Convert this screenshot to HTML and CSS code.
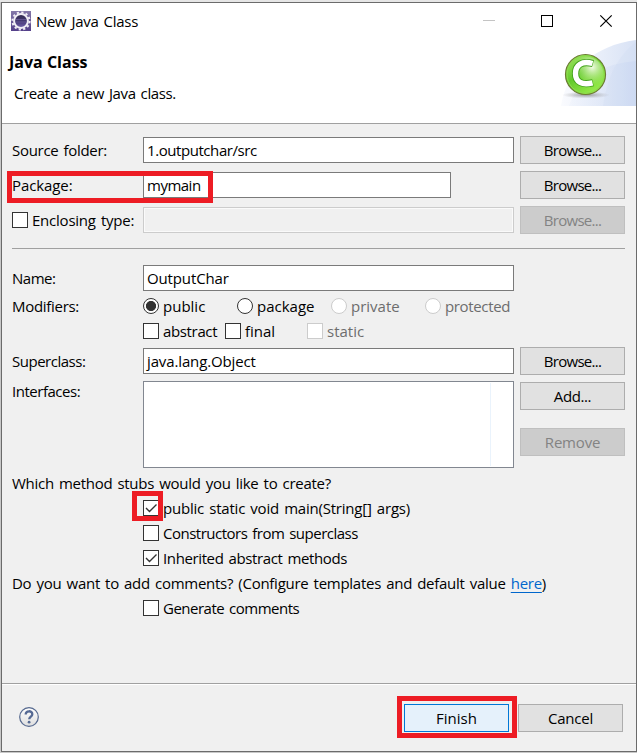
FILE: index.html
```html
<!DOCTYPE html>
<html lang="en">
<head>
<meta charset="utf-8">
<title>New Java Class</title>
<link rel="stylesheet" href="styles.css">
</head>
<body>
<div class="window">
  <header class="header">
    <div class="titlebar">
      <svg class="app-icon" width="20" height="20" viewBox="0 0 20 20">
        <defs><linearGradient id="ag" x1="0" y1="0" x2="0" y2="1"><stop offset="0" stop-color="#8478a8"/><stop offset="1" stop-color="#54408a"/></linearGradient>
        <linearGradient id="ai" x1="0" y1="0" x2="0" y2="1"><stop offset="0" stop-color="#2e2748"/><stop offset=".6" stop-color="#4a3c7c"/><stop offset="1" stop-color="#7565ae"/></linearGradient></defs>
        <rect width="20" height="20" fill="url(#ag)"/>
        <circle cx="10" cy="10" r="8.6" fill="none" stroke="#f1eef5" stroke-width="2" stroke-dasharray="2.2 2.303"/>
        <circle cx="10" cy="10" r="6.9" fill="url(#ai)" stroke="#f1eef5" stroke-width="2"/>
        <path d="M4.8 8.5h10.4M4.8 11h10.4" stroke="#7568a2" stroke-width=".6"/>
      </svg>
      <span class="title">New Java Class</span>
      <svg class="controls" width="130" height="14" viewBox="0 0 130 14">
        <path d="M0 6.5h12" stroke="#c4c4c4"/>
        <rect x="58.5" y="1.5" width="11" height="11" fill="none" stroke="#000"/>
        <path d="M117.3 1.3l11.4 11.4M128.700 1.3L117.300 12.700" stroke="#000" stroke-width="1.2"/>
      </svg>
    </div>
    <h1 class="heading">Java Class</h1>
    <p class="subtitle">Create a new Java class.</p>
    <svg class="banner" width="75" height="66" viewBox="0 0 75 66">
      <defs>
        <linearGradient id="b1" x1="0" y1="0" x2="1" y2="0"><stop offset="0" stop-color="#fafbfe"/><stop offset="1" stop-color="#d8e2f5"/></linearGradient>
        <linearGradient id="b2" x1="0" y1="0" x2="1" y2="0"><stop offset="0" stop-color="#e8eefa" stop-opacity=".3"/><stop offset="1" stop-color="#cbd8f2" stop-opacity=".7"/></linearGradient>
        <linearGradient id="g1" x1="0" y1="0" x2=".7" y2="1"><stop offset="0" stop-color="#a9e86a"/><stop offset=".5" stop-color="#63c92b"/><stop offset="1" stop-color="#9bee4c"/></linearGradient>
        <radialGradient id="g2" cx=".68" cy=".3" r=".5"><stop offset="0" stop-color="#f4fce8"/><stop offset="1" stop-color="#b6ea84" stop-opacity="0"/></radialGradient>
        <radialGradient id="sh"><stop offset="0" stop-color="#777" stop-opacity=".7"/><stop offset="1" stop-color="#999" stop-opacity="0"/></radialGradient>
      </defs>
      <path d="M0 66C5 32 33 5 75 0v66z" fill="url(#b1)"/>
      <path d="M8 66C18 36 42 24 75 21v45z" fill="url(#b2)"/>
      <path d="M42 66C46 38 56 16 75 2v64z" fill="#c9d7f2" opacity=".2"/>
      <ellipse cx="25" cy="55" rx="24" ry="3.500" fill="url(#sh)"/>
      <circle cx="24.500" cy="34.500" r="20" fill="url(#g1)" stroke="#6d7a35" stroke-width="1.200"/>
      <circle cx="24.500" cy="34.500" r="18.500" fill="url(#g2)" stroke="#8ddd4c" stroke-width="1"/>
      <path d="M32 23.500C21 20.500 14.500 25 14.500 33.500S21 45.500 32 42.800" fill="none" stroke="#43a31b" stroke-width="7.200"/>
      <path d="M31.500 23.500C21 20.500 14.500 25 14.500 33.500S21 45.500 31.500 42.800" fill="none" stroke="#fff" stroke-width="5.400"/>
    </svg>
  </header>

  <main class="form">
    <div class="row top"><label class="source">Source folder:</label><div class="input"><span class="src">1.outputchar/src</span></div><button class="browse">Browse...</button></div>
    <div class="row top"><label class="pkg">Package:</label><div class="input short"><span class="loose">mymain</span></div><button class="browse">Browse...</button><i class="mark mark-package"></i></div>
    <div class="row top"><label class="check"><i class="box"></i><span class="enc">Enclosing type:</span></label><div class="input off"></div><button class="browse" disabled>Browse...</button></div>
    <hr>
    <div class="row"><label class="tight-text">Name:</label><div class="input"><span class="loose">OutputChar</span></div></div>
    <div class="row modifiers">
      <label>Modifiers:</label>
      <div class="options">
        <span class="opt flat"><i class="radio on"></i>public</span><span class="opt flat"><i class="radio"></i>package</span><span class="opt dim flat"><i class="radio"></i>private</span><span class="opt dim"><i class="radio"></i>protected</span>
      </div>
    </div>
    <div class="row flags">
      <label></label>
      <div class="options tight">
        <span class="opt"><i class="box"></i>abstract</span><span class="opt flat"><i class="box"></i>final</span><span class="opt dim flat"><i class="box"></i>static</span>
      </div>
    </div>
    <div class="row super"><label class="tight-text">Superclass:</label><div class="input"><span class="loose">java.lang.Object</span></div><button class="browse">Browse...</button></div>
    <div class="row interfaces"><label class="tight-text">Interfaces:</label><div class="list"></div><div class="stack"><button class="add">Add...</button><button disabled>Remove</button></div></div>
    <p class="line which"><span class="q1">Which method stubs would you like to create?</span></p>
    <div class="opt sub"><i class="box"><svg viewBox="0 0 14 14"><path d="M2 7l3.500 3.500 7-7"/></svg></i><span class="m1">public static void main(String[] args)</span><b class="mark mark-check"></b></div>
    <div class="opt sub"><i class="box"></i><span class="m2">Constructors from superclass</span></div>
    <div class="opt sub"><i class="box"><svg viewBox="0 0 14 14"><path d="M2 7l3.500 3.500 7-7"/></svg></i><span class="m3">Inherited abstract methods</span></div>
    <p class="line"><span class="q2">Do you want to add comments? (Configure templates and default value <a>here</a>)</span></p>
    <div class="opt sub"><i class="box"></i><span class="m4">Generate comments</span></div>
  </main>

  <footer class="footer">
    <svg class="help" width="20" height="20" viewBox="0 0 20 20">
      <defs><linearGradient id="hg" x1="0" y1="0" x2="0" y2="1"><stop offset="0" stop-color="#fff"/><stop offset="1" stop-color="#dedede"/></linearGradient></defs>
      <circle cx="10" cy="10" r="9.300" fill="url(#hg)" stroke="#56698f" stroke-width="1.200"/>
      <path d="M6.700 7.500C6.700 3.200 13.300 3.300 13.300 7.200C13.300 9.600 10.200 9.600 10.200 12.300" fill="none" stroke="#566a94" stroke-width="2.300"/>
      <circle cx="10.100" cy="15.200" r="1.400" fill="#566a94"/>
    </svg>
    <div class="finish"><button class="primary">Finish</button><i class="mark mark-finish"></i></div>
    <button>Cancel</button>
  </footer>
</div>
</body>
</html>
```
FILE: styles.css
```css
* { box-sizing: border-box; }
body { margin: 0; height: 753px; overflow: hidden; background: linear-gradient(#e6e6e6 0 2px, #c8c8c8 2px); padding: 2px 0 0 1px; font: 15px/25px "Open Sans", "Noto Sans", sans-serif; color: #000; white-space: nowrap; word-spacing: 1.5px; }
.window { width: 636px; height: 750px; border: 1px solid #6b6b6b; background: #f0f0f0; display: flex; flex-direction: column; }
.header { height: 121px; background: #fff; border-bottom: 1px solid #a0a0a0; position: relative; flex: none; }
.titlebar { display: flex; align-items: center; height: 36px; padding: 0 23px 0 9px; }
.title { margin-left: 5px; flex: 1; letter-spacing: -.3px; }
.heading { margin: 11px 0 0 7px; font-size: 16px; line-height: 25px; font-weight: 700; word-spacing: 0; }
.subtitle { margin: 6px 0 0 12px; letter-spacing: -.38px; }
.banner { position: absolute; right: 0; top: 37px; }

.form { padding: 12px 11px 0 10px; flex: none; height: 559px; }
.row { display: grid; grid-template-columns: 131px 371px 111px; align-items: center; position: relative; }
.row.top { height: 28px; margin-bottom: 7px; }
.row > button, .stack { margin-left: 6px; }
.input { height: 26px; border: 1px solid #7a7a7a; background: #fff; padding-left: 3px; line-height: 25px; }
.input.short { width: 308px; }
.input.off { border-color: #ccc; background: #f0f0f0; box-shadow: inset 0 0 0 1px #fafafa; }
button { width: 105px; height: 28px; margin: 0; padding: 0; border: 1px solid #adadad; background: #e1e1e1; font: inherit; line-height: 26px; color: #000; letter-spacing: -.2px; }
button:disabled { background: #ccc; border-color: #bfbfbf; color: #838383; }
button.primary { background: #e5f1fb; border-color: #0078d7; letter-spacing: 0; }
.browse { letter-spacing: -.7px; }
.add { letter-spacing: -.4px; }
hr { margin: 14px 0 16px; border: 0; height: 1px; background: #a0a0a0; }

label { letter-spacing: -.3px; }
label.pkg { letter-spacing: -.1px; }
.tight-text { letter-spacing: -.48px; }
.enc { letter-spacing: -.23px; }
.src { letter-spacing: -.43px; }
.loose { letter-spacing: -.13px; }
.input.short .loose { letter-spacing: -.5px; }
.q1 { letter-spacing: -.28px; }
.q2 { letter-spacing: -.27px; }
.m1 { letter-spacing: -.21px; }
.m2 { letter-spacing: -.5px; }
.m3 { letter-spacing: -.38px; }
.m4 { letter-spacing: -.5px; }

.modifiers, .flags { height: 25px; }
.modifiers { margin-top: 3px; }
.options { display: grid; grid-template-columns: repeat(4, 94px); }
.options.tight { grid-template-columns: repeat(3, 82px); }
.opt, .check { display: flex; gap: 4px; height: 25px; align-items: flex-start; position: relative; }
.options .opt { letter-spacing: -.35px; }
.options .flat { letter-spacing: 0; }
.box, .radio { width: 16px; height: 16px; flex: none; border: 1px solid #333; background: #fff; margin-top: 4px; }
.radio { border-radius: 50%; }
.radio.on { background: radial-gradient(circle, #333 4.700px, #fff 5.400px); }
.box svg { display: block; fill: none; stroke: #333; stroke-width: 1.400; }
.dim { color: #6d6d6d; }
.dim .box, .dim .radio { border-color: #ccc; }
.super { height: 28px; margin-top: 3px; }
.interfaces { align-items: start; margin-top: 6px; }
.interfaces label { line-height: 20px; }
.list { height: 87px; border: 1px solid #828790; background: linear-gradient(#eaf3fc, #eaf3fc) 346px 1px / 1px 83px no-repeat #fff; }
.stack { display: grid; gap: 18px; padding-top: 1px; }
.line { margin: 0; }
.which { margin-top: 3px; }
.sub { margin-left: 131px; }
a { color: #0066cc; text-decoration: underline; text-underline-offset: 3px; }

.footer { flex: 1; border-top: 1px solid #a0a0a0; box-shadow: inset 0 1px #fff; display: flex; align-items: flex-start; padding: 20px 13px 0 17px; }
.help { margin: 3px auto 0 0; }
.finish { position: relative; margin-right: 9px; height: 28px; }
.mark { position: absolute; border: 5px solid #ed1c24; }
.mark-package { left: -5px; top: 0; width: 206px; height: 32px; }
.mark-check { left: -11px; top: -5px; width: 31px; height: 30px; }
.mark-finish { left: -7px; top: -8px; width: 120px; height: 42px; }
```
